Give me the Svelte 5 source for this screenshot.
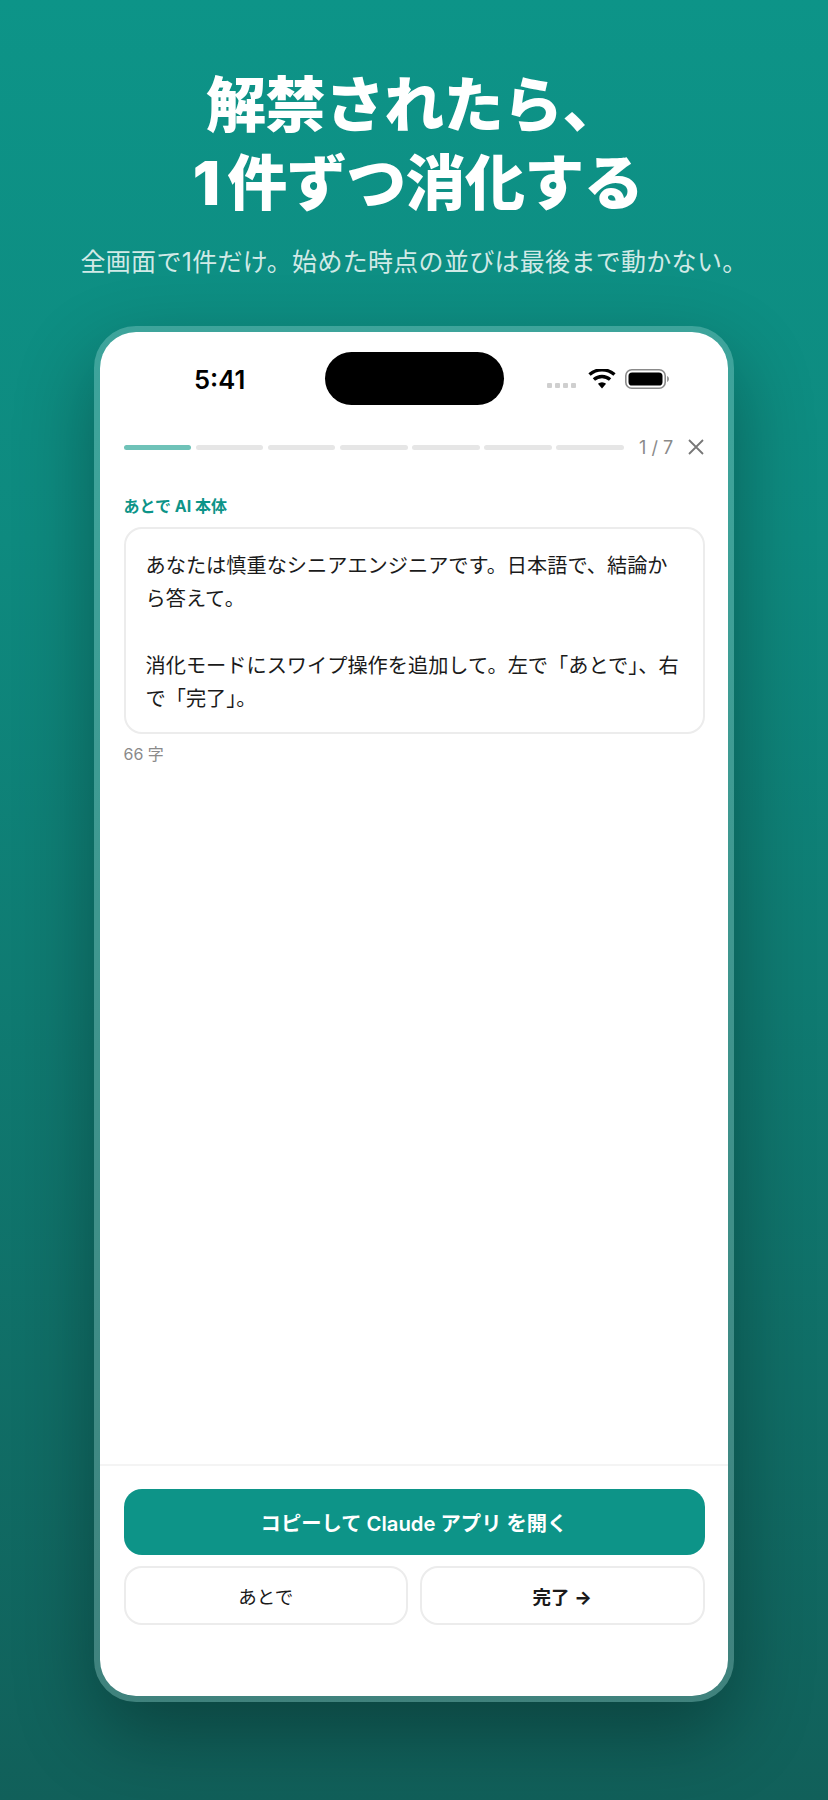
<script lang="ts">
  const steps = [1, 2, 3, 4, 5, 6, 7];
  const current = 1;
</script>

<div class="page">
  <header class="hero">
    <h1>解禁されたら、<br /><span class="num">1</span>件ずつ消化する</h1>
    <p>全画面で1件だけ。始めた時点の並びは最後まで動かない。</p>
  </header>

  <div class="phone">
    <div class="screen">
      <div class="status">
        <span class="time">5:41</span>
        <span class="island"></span>
        <div class="indicators">
          <span class="signal"><i></i><i></i><i></i><i></i></span>
          <svg class="wifi" viewBox="0 0 28 20" aria-hidden="true">
            <path d="M14 19.6 9.9 14.7a6.2 6.2 0 0 1 8.2 0Z" />
            <path d="M5.9 10.6a12.2 12.2 0 0 1 16.2 0" class="arc" />
            <path d="M1.5 5.6a18.8 18.8 0 0 1 25 0" class="arc" />
          </svg>
          <svg class="battery" viewBox="0 0 44 20" aria-hidden="true">
            <rect x="0.8" y="0.8" width="39.4" height="18.4" rx="6" class="shell" />
            <rect x="3.5" y="3.5" width="34" height="13" rx="3.6" />
            <path d="M42 7v6c1.2-.4 2-1.6 2-3s-.8-2.6-2-3Z" class="cap" />
          </svg>
        </div>
      </div>

      <div class="progress">
        <div class="bars">
          {#each steps as step (step)}
            <span class="bar" class:on={step === current}></span>
          {/each}
        </div>
        <span class="count">1 / 7</span>
        <svg class="close" viewBox="0 0 16 16" aria-hidden="true">
          <path d="M1 1 15 15M15 1 1 15" />
        </svg>
      </div>

      <main class="body">
        <div class="label">あとで AI 本体</div>
        <div class="prompt">
          <p>あなたは慎重なシニアエンジニアです。日本語で、結論から答えて。</p>
          <p>消化モードにスワイプ操作を追加して。左で「あとで」、右で「完了」。</p>
        </div>
        <div class="chars">66 字</div>
      </main>

      <footer class="actions">
        <button class="primary">コピーして Claude アプリ を開く</button>
        <div class="row">
          <button class="secondary">あとで</button>
          <button class="secondary strong">完了 <span class="arrow">→</span></button>
        </div>
      </footer>
    </div>
  </div>
</div>

<style>
  :global(body) {
    margin: 0;
  }

  .page {
    width: 828px;
    height: 1800px;
    box-sizing: border-box;
    overflow: hidden;
    padding-top: 66px;
    display: flex;
    flex-direction: column;
    align-items: center;
    background: linear-gradient(180deg, #0d9488 0%, #0e8a7f 30%, #11605a 100%);
    font-family: Inter, "Noto Sans CJK JP", sans-serif;
    color: #1a1a1a;
  }

  .hero {
    text-align: center;
    color: #fff;
  }

  h1 {
    margin: 0;
    font-size: 60px;
    line-height: 78px;
    font-weight: 900;
    letter-spacing: -0.01em;
  }

  .num {
    margin-left: 8px;
    margin-right: 8px;
  }

  .hero p {
    margin: 23px 0 0;
    font-size: 25px;
    line-height: 34px;
    letter-spacing: 0.012em;
    color: rgba(255, 255, 255, 0.82);
  }

  .phone {
    margin-top: 47px;
    width: 640px;
    height: 1376px;
    box-sizing: border-box;
    border: 6px solid rgba(255, 255, 255, 0.2);
    border-radius: 42px;
    box-shadow: 0 32px 80px rgba(0, 0, 0, 0.32);
  }

  .screen {
    height: 100%;
    box-sizing: border-box;
    border-radius: 36px;
    background: #fff;
    display: flex;
    flex-direction: column;
    overflow: hidden;
  }

  .status {
    display: grid;
    grid-template-columns: 1fr 179px 1fr;
    align-items: center;
    padding-top: 20px;
  }

  .time {
    justify-self: start;
    margin-left: 94px;
    margin-top: 2px;
    font-size: 25.6px;
    font-weight: 600;
    color: #000;
  }

  .island {
    height: 53px;
    border-radius: 27px;
    background: #000;
  }

  .indicators {
    display: flex;
    align-items: center;
    margin-left: 43px;
    height: 53px;
  }

  .signal {
    display: flex;
    gap: 3px;
    margin-top: 14px;
    margin-right: 12px;
  }

  .signal i {
    width: 5px;
    height: 5px;
    border-radius: 1px;
    background: #cfcfcf;
  }

  .wifi {
    width: 28px;
    height: 20px;
    margin-right: 9px;
  }

  .wifi path {
    fill: #000;
  }

  .wifi path.arc {
    fill: none;
    stroke: #000;
    stroke-width: 3.4;
  }

  .battery {
    width: 44px;
    height: 20px;
  }

  .battery .shell {
    fill: none;
    stroke: #8a8a8a;
    stroke-width: 1.6;
  }

  .battery .cap {
    fill: #9a9a9a;
  }

  .progress {
    display: flex;
    align-items: center;
    margin-top: 30px;
    padding: 0 24px 0 23.5px;
    height: 24px;
  }

  .bars {
    width: 500.5px;
    display: flex;
    gap: 4.6px;
  }

  .bar {
    flex: 1;
    height: 5px;
    border-radius: 3px;
    background: #e6e6e6;
  }

  .bar.on {
    background: #6fc2b8;
  }

  .count {
    margin-left: 15px;
    font-size: 18px;
    color: #8a8a8a;
    white-space: nowrap;
  }

  .close {
    width: 16px;
    height: 16px;
    margin-left: auto;
  }

  .close path {
    fill: none;
    stroke: #777;
    stroke-width: 1.8;
  }

  .body {
    flex: 1;
    padding: 0 23.5px;
  }

  .label {
    margin-top: 36px;
    font-size: 16px;
    line-height: 22px;
    font-weight: 700;
    color: #0d9488;
  }

  .prompt {
    margin-top: 10px;
    height: 207px;
    box-sizing: border-box;
    padding: 20px 20px;
    border: 2px solid #ececec;
    border-radius: 18px;
    font-size: 20.2px;
    line-height: 33.2px;
  }

  .prompt p {
    margin: 0 0 33.2px;
  }

  .chars {
    margin-top: 9px;
    font-size: 16px;
    line-height: 22px;
    color: #8a8a8a;
  }

  .actions {
    border-top: 2px solid #f4f4f4;
    padding: 23px 23.5px 71px;
    display: flex;
    flex-direction: column;
    gap: 11px;
  }

  .row {
    display: grid;
    grid-template-columns: 1fr 1fr;
    gap: 12px;
  }

  button {
    font: inherit;
    border-radius: 18px;
  }

  .primary {
    height: 66px;
    border: 0;
    background: #0d9488;
    color: #fff;
    font-size: 20.3px;
    font-weight: 600;
  }

  .secondary {
    height: 59px;
    border: 2px solid #ececec;
    background: #fff;
    color: #1a1a1a;
    font-size: 18.5px;
  }

  .secondary.strong {
    font-weight: 600;
  }

  .arrow {
    font-weight: 800;
  }
</style>
